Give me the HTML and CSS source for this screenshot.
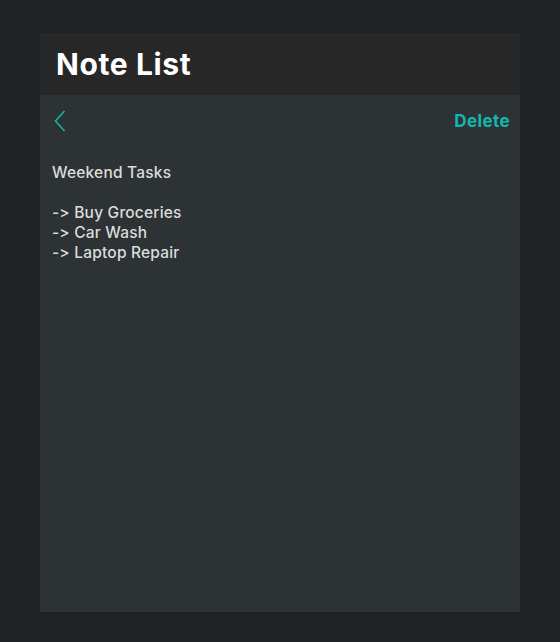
FILE: index.html
```html
<!DOCTYPE html>
<html>
<head>
<meta charset="utf-8">
<link rel="stylesheet" href="styles.css">
</head>
<body>
<div class="app">
  <header class="header"><h1 class="title">Note List</h1></header>
  <main class="note">
    <div class="toolbar">
      <button class="back" aria-label="Back">
        <svg width="12" height="22" viewBox="0 0 12 22"><path d="M10.5 1 L1.5 11 L10.5 21" fill="none" stroke="#14b8ae" stroke-width="1.5"/></svg>
      </button>
      <button class="delete">Delete</button>
    </div>
    <div class="content">Weekend Tasks

-&gt; Buy Groceries
-&gt; Car Wash
-&gt; Laptop Repair</div>
  </main>
</div>
</body>
</html>
```
FILE: styles.css
```css
html, body { margin: 0; padding: 0; }
body {
  background: #1f2225;
  font-family: "Inter", "Noto Sans", sans-serif;
  font-feature-settings: "calt" 0, "liga" 0;
  font-variant-ligatures: none;
  width: 560px;
  height: 642px;
}
.app {
  margin: 33px 40px 0 40px;
  width: 480px;
  height: 579px;
  display: flex;
  flex-direction: column;
}
.header {
  background: #272727;
  height: 62px;
  display: flex;
  align-items: center;
  padding-left: 16px;
}
.title {
  margin: 0;
  color: #ffffff;
  font-size: 30px;
  font-weight: 700;
  letter-spacing: 0.6px;
}
.note {
  flex: 1;
  background: #2d3235;
  padding: 0 10px 0 12px;
}
.toolbar {
  height: 52px;
  display: flex;
  align-items: center;
  justify-content: space-between;
}
.back {
  background: none;
  border: 0;
  padding: 0 0 0 2px;
  display: flex;
}
.delete {
  background: none;
  border: 0;
  padding: 0;
  color: #14b8ae;
  font-family: inherit;
  font-feature-settings: "calt" 0;
  font-size: 17px;
  font-weight: 700;
  letter-spacing: 0.4px;
}
.content {
  white-space: pre-wrap;
  color: #dcdcdc;
  font-size: 15.5px;
  font-weight: 500;
  line-height: 20px;
  padding-top: 16px;
  letter-spacing: 0.2px;
}
```
